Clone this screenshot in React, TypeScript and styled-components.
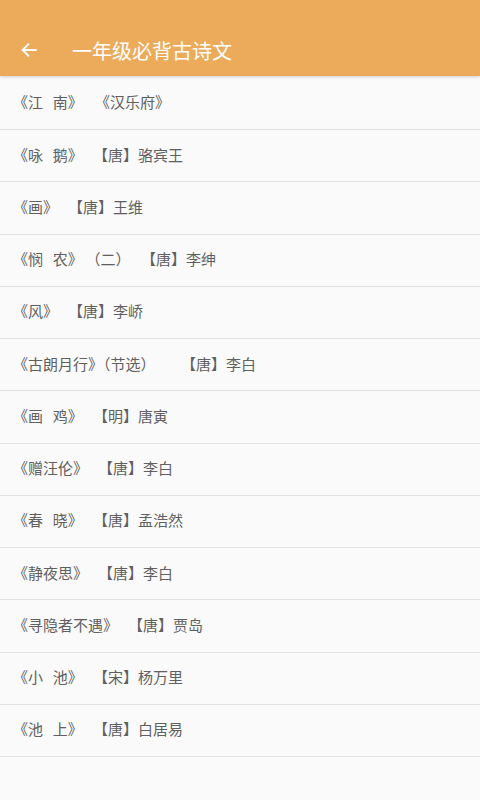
import styled, { createGlobalStyle } from "styled-components";

type Poem = {
  name: string;
  extra?: string;
  author: string;
  extraGap?: number;
  authorGap?: number;
};

const poems: Poem[] = [
  { name: "《江 南》", author: "《汉乐府》", authorGap: 12 },
  { name: "《咏 鹅》", author: "【唐】骆宾王" },
  { name: "《画》", author: "【唐】王维" },
  { name: "《悯 农》", extra: "（二）", author: "【唐】李绅", extraGap: 10, authorGap: 18 },
  { name: "《风》", author: "【唐】李峤" },
  { name: "《古朗月行》", extra: "（节选）", author: "【唐】李白", extraGap: 0, authorGap: 33 },
  { name: "《画 鸡》", author: "【明】唐寅" },
  { name: "《赠汪伦》", author: "【唐】李白" },
  { name: "《春 晓》", author: "【唐】孟浩然" },
  { name: "《静夜思》", author: "【唐】李白" },
  { name: "《寻隐者不遇》", author: "【唐】贾岛" },
  { name: "《小 池》", author: "【宋】杨万里" },
  { name: "《池 上》", author: "【唐】白居易" },
];

const GlobalStyle = createGlobalStyle`
  html, body {
    margin: 0;
    padding: 0;
    background: #fafafa;
  }
  body {
    font-family: "Noto Sans CJK SC", sans-serif;
  }
`;

export default function App() {
  return (
    <Page>
      <GlobalStyle />
      <Header>
        <BackButton aria-label="back">
          <svg width="18" height="18" viewBox="0 0 24 24" fill="none">
            <path
              d="M21 12H4M11 4.5L3.5 12L11 19.5"
              stroke="#fff"
              strokeWidth="2.6"
              strokeLinecap="square"
            />
          </svg>
        </BackButton>
        <Title>一年级必背古诗文</Title>
      </Header>
      <List>
        {poems.map((p) => (
          <Row key={p.name}>
            <Name>{p.name}</Name>
            {p.extra && <Extra $gap={p.extraGap ?? 8}>{p.extra}</Extra>}
            <Author $gap={p.authorGap ?? 10}>{p.author}</Author>
          </Row>
        ))}
      </List>
    </Page>
  );
}

const Page = styled.div`
  width: 480px;
  height: 800px;
  background: #fafafa;
  overflow: hidden;
`;

const Header = styled.header`
  position: relative;
  z-index: 2;
  display: flex;
  align-items: center;
  height: 76px;
  padding: 24px 0 0 19px;
  box-sizing: border-box;
  background: #ebab5a;
  box-shadow: 0 1px 3px rgba(0, 0, 0, 0.18);
`;

const BackButton = styled.button`
  display: flex;
  align-items: center;
  justify-content: center;
  width: 20px;
  height: 24px;
  padding: 0;
  border: none;
  background: none;
`;

const Title = styled.h1`
  margin: 0 0 0 33px;
  font-size: 20px;
  font-weight: 400;
  color: #fff;
`;

const List = styled.ul`
  list-style: none;
  margin: 0;
  padding: 1.75px 0 0;
`;

const Row = styled.li`
  display: flex;
  align-items: center;
  height: 52.25px;
  box-sizing: border-box;
  padding: 0 0 3px 13px;
  border-bottom: 1px solid #e2e2e2;
  font-size: 15px;
  color: #606060;
  white-space: pre;
  text-spacing-trim: space-all;
`;

const Name = styled.span`
  word-spacing: 6.5px;
`;

const Extra = styled.span<{ $gap: number }>`
  margin-left: ${({ $gap }) => $gap}px;
  font-feature-settings: "halt";
`;

const Author = styled.span<{ $gap: number }>`
  margin-left: ${({ $gap }) => $gap}px;
`;
